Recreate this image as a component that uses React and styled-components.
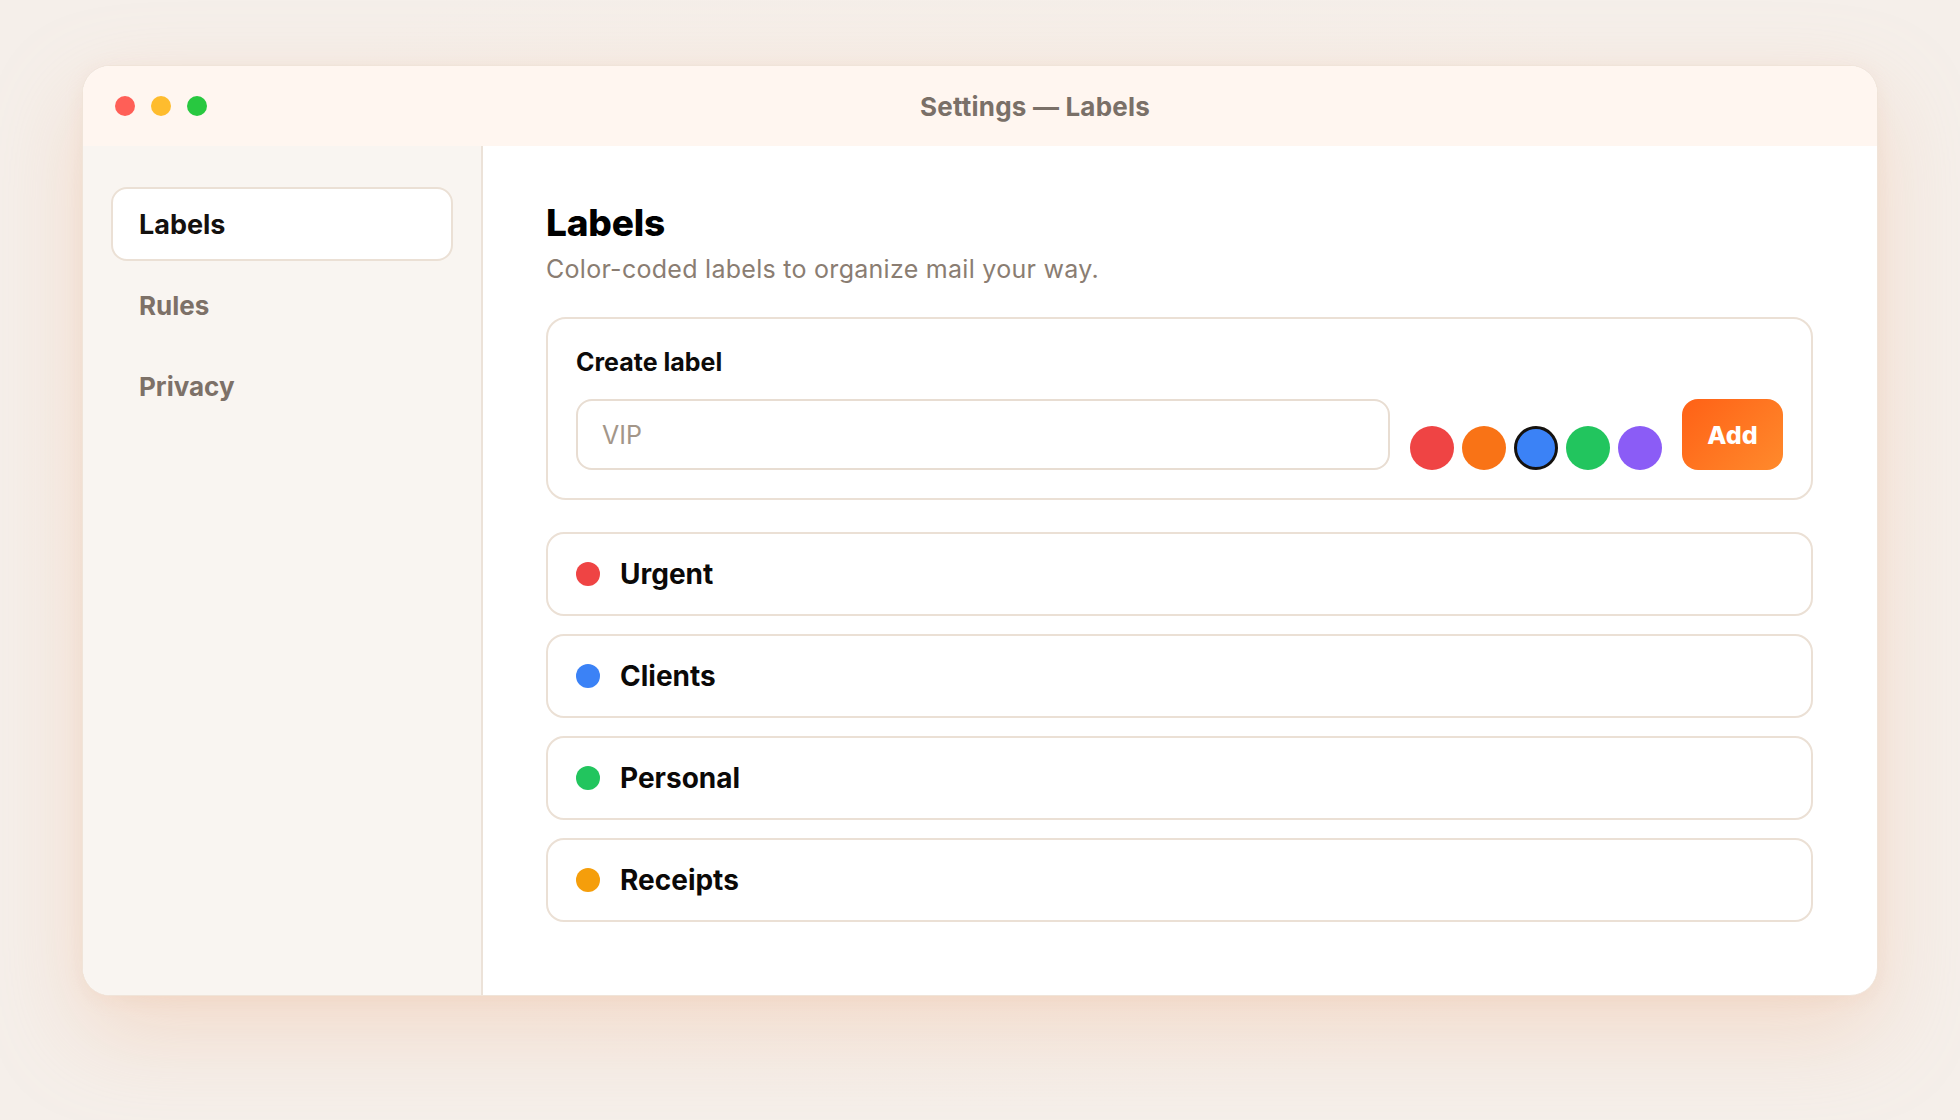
import styled, { createGlobalStyle } from 'styled-components';

const GlobalStyle = createGlobalStyle`
  * { box-sizing: border-box; }
  html, body {
    margin: 0;
    padding: 0;
    background: #f5efea;
    font-family: Inter, "Noto Sans", "Liberation Sans", sans-serif;
    -webkit-font-smoothing: antialiased;
  }
`;

const Page = styled.div`
  width: 1960px;
  height: 1120px;
  padding-top: 65px;
  background: radial-gradient(ellipse at 50% 45%, #f7ede5 0%, #f5efea 70%);
`;

const Window = styled.div`
  width: 1796px;
  height: 931px;
  margin: 0 auto;
  display: flex;
  flex-direction: column;
  border-radius: 28px;
  overflow: hidden;
  background: #ffffff;
  border: 1px solid #f0e4d9;
  box-shadow: 0 36px 90px rgba(236, 178, 140, 0.34), 0 4px 18px rgba(236, 190, 160, 0.18);
`;

const TitleBar = styled.div`
  height: 80px;
  flex-shrink: 0;
  display: flex;
  align-items: center;
  padding: 0 24px 0 32px;
  background: #fff6f0;
`;

const Lights = styled.div`
  display: flex;
  gap: 16px;
`;

const Light = styled.span`
  width: 20px;
  height: 20px;
  border-radius: 50%;
  background: ${(p) => p.$color};
`;

const Title = styled.div`
  flex: 1;
  text-align: center;
  padding-left: 10px;
  font-size: 26px;
  font-weight: 700;
  color: #7a7068;
  letter-spacing: 0.2px;
`;

const Body = styled.div`
  flex: 1;
  display: flex;
  min-height: 0;
`;

const Sidebar = styled.nav`
  width: 400px;
  flex-shrink: 0;
  background: #f9f5f1;
  border-right: 2px solid #ece2d8;
  padding: 41px 28px;
  display: flex;
  flex-direction: column;
  gap: 7px;
`;

const NavItem = styled.div`
  height: 74px;
  display: flex;
  align-items: center;
  padding: 0 26px;
  border-radius: 16px;
  font-size: ${(p) => (p.$active ? '27px' : '26px')};
  font-weight: 700;
  color: ${(p) => (p.$active ? '#14110f' : '#7d7168')};
  background: ${(p) => (p.$active ? '#ffffff' : 'transparent')};
  border: 2px solid ${(p) => (p.$active ? '#ebe0d5' : 'transparent')};
`;

const Main = styled.main`
  flex: 1;
  padding: 55px 64px 0 63px;
`;

const Heading = styled.h1`
  margin: 0;
  font-size: 37px;
  line-height: 44px;
  font-weight: 800;
  color: #000;
  letter-spacing: -0.2px;
`;

const Subtitle = styled.p`
  margin: 8px 0 0;
  font-size: 25px;
  line-height: 32px;
  color: #8a7d72;
  letter-spacing: 0.28px;
`;

const Card = styled.section`
  margin-top: 32px;
  border: 2px solid #ebe0d5;
  border-radius: 20px;
  padding: 27px 28px 28px;
`;

const CardTitle = styled.h2`
  margin: 0;
  font-size: 25px;
  line-height: 32px;
  font-weight: 700;
  color: #0d0b0a;
`;

const FormRow = styled.div`
  margin-top: 21px;
  display: flex;
  align-items: flex-end;
  gap: 20px;
`;

const Input = styled.input`
  flex: 1;
  height: 71px;
  border: 2px solid #e8ddd2;
  border-radius: 16px;
  padding: 0 24px;
  font-family: inherit;
  font-size: 25px;
  color: #222;
  background: #fff;
  outline: none;

  &::placeholder {
    color: #a39689;
  }
`;

const Swatches = styled.div`
  display: flex;
  gap: 8px;
`;

const Swatch = styled.span`
  width: 44px;
  height: 44px;
  border-radius: 50%;
  background: ${(p) => p.$color};
  border: ${(p) => (p.$selected ? '3.5px solid #15120f' : 'none')};
`;

const AddButton = styled.button`
  width: 101px;
  height: 71px;
  border: none;
  border-radius: 16px;
  background: linear-gradient(135deg, #ff6116 0%, #ff8a2c 100%);
  color: #fff;
  font-family: inherit;
  font-size: 25px;
  font-weight: 800;
`;

const List = styled.div`
  margin-top: 32px;
  display: flex;
  flex-direction: column;
  gap: 18px;
`;

const Row = styled.div`
  height: 84px;
  display: flex;
  align-items: center;
  gap: 20px;
  padding: 0 28px;
  border: 2px solid #ebe0d5;
  border-radius: 18px;
  font-size: 28px;
  font-weight: 700;
  color: #0b0908;
`;

const Dot = styled.span`
  width: 24px;
  height: 24px;
  border-radius: 50%;
  background: ${(p) => p.$color};
`;

const swatches = [
  { color: '#ef4444' },
  { color: '#f97316' },
  { color: '#3b82f6', selected: true },
  { color: '#22c55e' },
  { color: '#8b5cf6' },
];

const labels = [
  { name: 'Urgent', color: '#ef4444' },
  { name: 'Clients', color: '#3b82f6' },
  { name: 'Personal', color: '#22c55e' },
  { name: 'Receipts', color: '#f59e0b' },
];

const App = () => {
  return (
    <>
      <GlobalStyle />
      <Page>
        <Window>
          <TitleBar>
            <Lights>
              <Light $color='#ff5f57' />
              <Light $color='#febc2e' />
              <Light $color='#28c840' />
            </Lights>
            <Title>Settings — Labels</Title>
          </TitleBar>
          <Body>
            <Sidebar>
              <NavItem $active>Labels</NavItem>
              <NavItem>Rules</NavItem>
              <NavItem>Privacy</NavItem>
            </Sidebar>
            <Main>
              <Heading>Labels</Heading>
              <Subtitle>Color-coded labels to organize mail your way.</Subtitle>
              <Card>
                <CardTitle>Create label</CardTitle>
                <FormRow>
                  <Input placeholder='VIP' />
                  <Swatches>
                    {swatches.map((s) => (
                      <Swatch key={s.color} $color={s.color} $selected={s.selected} />
                    ))}
                  </Swatches>
                  <AddButton>Add</AddButton>
                </FormRow>
              </Card>
              <List>
                {labels.map((l) => (
                  <Row key={l.name}>
                    <Dot $color={l.color} />
                    {l.name}
                  </Row>
                ))}
              </List>
            </Main>
          </Body>
        </Window>
      </Page>
    </>
  );
};

export default App;
